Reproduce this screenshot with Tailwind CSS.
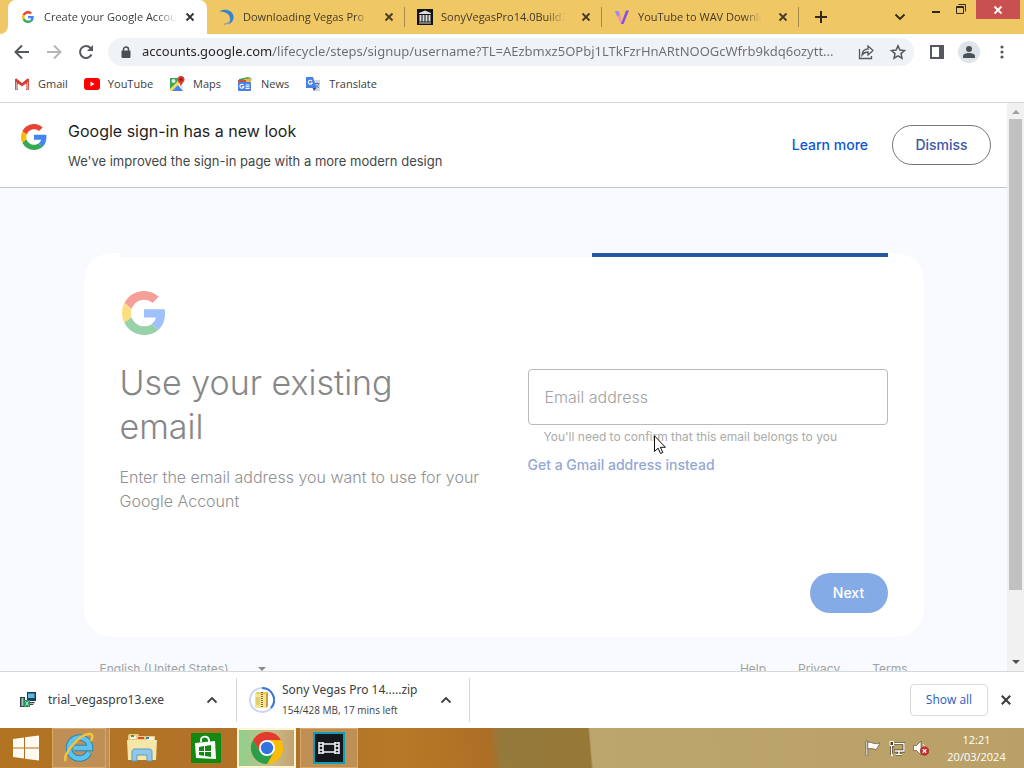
<!DOCTYPE html>
<html lang="en">
<head>
    <meta charset="UTF-8">
    <title>Create your Google Account</title>
    <script src="https://cdn.jsdelivr.net/npm/@tailwindcss/browser@4"></script>
</head>
<body class="h-screen flex flex-col overflow-hidden bg-white font-['Open_Sans',sans-serif] text-[#3c4043]">

    <!-- Shared shapes -->
    <svg class="hidden">
        <symbol id="google" viewBox="0 0 48 48">
            <path fill="#EA4335" d="M24 9.5c3.54 0 6.71 1.22 9.21 3.6l6.85-6.85C35.9 2.38 30.47 0 24 0 14.62 0 6.51 5.38 2.56 13.22l7.98 6.19C12.43 13.72 17.74 9.5 24 9.5z"/>
            <path fill="#4285F4" d="M46.98 24.55c0-1.57-.15-3.09-.38-4.55H24v9.02h12.94c-.58 2.96-2.26 5.48-4.78 7.18l7.73 6c4.51-4.18 7.09-10.36 7.09-17.65z"/>
            <path fill="#FBBC05" d="M10.53 28.59c-.48-1.45-.76-2.99-.76-4.59s.27-3.14.76-4.59l-7.98-6.19C.92 16.46 0 20.12 0 24c0 3.88.92 7.54 2.56 10.78l7.97-6.19z"/>
            <path fill="#34A853" d="M24 48c6.48 0 11.93-2.13 15.89-5.81l-7.73-6c-2.15 1.45-4.92 2.3-8.16 2.3-6.26 0-11.57-4.22-13.47-9.91l-7.98 6.19C6.51 42.62 14.62 48 24 48z"/>
        </symbol>
        <symbol id="cross" viewBox="0 0 10 10">
            <path d="M1.5 1.5l7 7M8.5 1.5l-7 7" stroke="currentColor" stroke-width="1.8" fill="none"/>
        </symbol>
        <symbol id="up" viewBox="0 0 12 8">
            <path d="M1.5 6.5L6 2l4.500 4.500" stroke="currentColor" stroke-width="1.8" fill="none"/>
        </symbol>
    </svg>

    <!-- Tab strip -->
    <header class="h-[34px] shrink-0 flex bg-[#efc765] text-[11px] text-[#45392a]">
        <svg class="w-2 h-2 self-end shrink-0" viewBox="0 0 8 8"><path d="M8 0v8H0a8 8 0 0 0 8-8z" fill="#fff"/></svg>
        <div class="w-[199px] shrink-0 h-full flex items-center px-3 rounded-t-lg bg-white text-[#3c4043]">
            <svg class="w-4 h-4 shrink-0 p-[2px]"><use href="#google"/></svg>
            <span class="flex-1 ml-2 mr-2 overflow-hidden whitespace-nowrap mask-r-from-85%">Create your Google Account</span>
            <button aria-label="Close tab"><svg class="w-[10px] h-[10px] text-[#333]"><use href="#cross"/></svg></button>
        </div>
        <div class="w-[198px] shrink-0 h-full flex items-center pl-3">
            <svg class="w-4 h-4 shrink-0" viewBox="0 0 16 16" fill="none">
                <path d="M0 2.500C6-1 13 1 14.500 7c.5 4-1.500 7-5.500 8.500 2-3 2.500-5 1.500-8C9.500 4 5 2.500 0 2.500z" fill="#3b82d0"/>
                <path d="M5 15.500c2-1 4-1 6-2.500" stroke="#8d9fa8" stroke-width="1.500"/>
            </svg>
            <span class="flex-1 ml-2 mr-4 overflow-hidden whitespace-nowrap mask-r-from-90%">Downloading Vegas Pro 14</span>
            <button aria-label="Close tab"><svg class="w-[10px] h-[10px]"><use href="#cross"/></svg></button>
            <span class="ml-[10px] w-px h-5 bg-[#a58a4c]"></span>
        </div>
        <div class="w-[197px] shrink-0 h-full flex items-center pl-3">
            <svg class="w-4 h-4 shrink-0" viewBox="0 0 16 16">
                <rect width="16" height="16" fill="#111"/>
                <path d="M8 1.500L2 4v1h12V4zM2.500 6h2v6.500h-2zM5.500 6h2v6.500h-2zM8.500 6h2v6.500h-2zM11.500 6h2v6.500h-2zM2 13.500h12v1H2z" fill="#ddd"/>
            </svg>
            <span class="flex-1 ml-2 mr-4 overflow-hidden whitespace-nowrap mask-r-from-85%">SonyVegasPro14.0Build211</span>
            <button aria-label="Close tab"><svg class="w-[10px] h-[10px]"><use href="#cross"/></svg></button>
            <span class="ml-[10px] w-px h-5 bg-[#a58a4c]"></span>
        </div>
        <div class="w-[197px] shrink-0 h-full flex items-center pl-3">
            <svg class="w-4 h-4 shrink-0" viewBox="0 0 16 16">
                <path d="M1 2h3.500l5 13H7z" fill="#f08fc0"/>
                <path d="M12 1.500h3L9.500 15H7z" fill="#8b4fe0"/>
                <path d="M1 2h3.500l1.500 4-3 1z" fill="#9a8bf0"/>
            </svg>
            <span class="flex-1 ml-2 mr-4 overflow-hidden whitespace-nowrap mask-r-from-85%">YouTube to WAV Downloader</span>
            <button aria-label="Close tab"><svg class="w-[10px] h-[10px]"><use href="#cross"/></svg></button>
            <span class="ml-[10px] w-px h-5 bg-[#a58a4c]"></span>
        </div>
        <button class="ml-4 self-center" aria-label="New tab">
            <svg class="w-3 h-3" viewBox="0 0 12 12"><path d="M6 0v12M0 6h12" stroke="#30291c" stroke-width="2"/></svg>
        </button>
        <div class="ml-auto flex items-start">
            <button class="h-full mr-[26px]" aria-label="Search tabs">
                <svg class="w-3 h-2 rotate-180 text-[#30291c]"><use href="#up"/></svg>
            </button>
            <button class="w-2 h-[18px]" aria-label="Minimize"><svg class="w-2 h-[18px]" viewBox="0 0 8 18"><path d="M0 12h8" stroke="#30291c" stroke-width="2"/></svg></button>
            <button class="ml-4 mr-2 w-3 h-[18px]" aria-label="Restore">
                <svg class="w-[11px] h-[18px]" viewBox="0 0 11 18" fill="none" stroke="#30291c"><path d="M.5 6.500h7v7h-7zM.5 7.500h7M2.500 4.500h7v7"/></svg>
            </button>
            <button class="w-11 h-[19px] mr-1 flex items-center justify-center bg-[#c95050] text-white" aria-label="Close"><svg class="w-[10px] h-[10px]"><use href="#cross"/></svg></button>
        </div>
    </header>

    <!-- Toolbar -->
    <nav class="h-9 shrink-0 flex items-center pl-[14px] pr-5 text-[#55595d]">
        <button aria-label="Back"><svg class="w-4 h-4" viewBox="0 0 16 16" fill="none" stroke="currentColor" stroke-width="2"><path d="M15 8H2M8 1.500L1.500 8 8 14.500"/></svg></button>
        <button class="ml-4 text-[#b4b6b8]" aria-label="Forward"><svg class="w-4 h-4" viewBox="0 0 16 16" fill="none" stroke="currentColor" stroke-width="2"><path d="M1 8h13M8 1.500L14.500 8 8 14.500"/></svg></button>
        <button class="ml-4" aria-label="Reload"><svg class="w-4 h-4" viewBox="0 0 16 16" fill="none"><path d="M13.500 10.500A6 6 0 1 1 12.500 4l1 1" stroke="currentColor" stroke-width="2"/><path d="M15 1v6H9z" fill="currentColor"/></svg></button>
        <div class="flex-1 min-w-0 h-7 ml-[14px] flex items-center gap-3 pl-3 pr-2 rounded-full bg-[#f0f3f5]">
            <svg class="w-3 h-3 shrink-0" viewBox="0 0 12 12"><path d="M3.500 5V3.500a2.500 2.500 0 0 1 5 0V5" stroke="#4b4f53" stroke-width="1.500" fill="none"/><rect x="1.500" y="4.500" width="9" height="7.500" rx="1" fill="#4b4f53"/></svg>
            <input aria-label="Address" class="-ml-[2px] flex-1 min-w-0 font-['Noto_Sans',sans-serif] text-[13px] outline-none bg-[linear-gradient(90deg,#202124_131px,#6a6e72_131px)] bg-clip-text text-transparent" value="accounts.google.com/lifecycle/steps/signup/username?TL=AEzbmxz5OPbj1LTkFzrHnARtNOOGcWfrb9kdq6ozytt...">
            <button aria-label="Share"><svg class="w-4 h-4" viewBox="0 0 16 16" fill="none" stroke="currentColor" stroke-width="1.300"><path d="M1.500 5v9.500h12V12M4 11c.5-4 3-6 6-6V2l5 4.500-5 4.500V8C7.500 8 5.500 9 4 11z"/></svg></button>
            <button class="ml-1" aria-label="Bookmark"><svg class="w-4 h-4" viewBox="0 0 16 16" fill="none" stroke="currentColor" stroke-width="1.500"><path d="M8 1.800l1.900 4.300 4.600.4-3.500 3.100 1 4.600L8 11.800l-4 2.400 1-4.600-3.500-3.100 4.600-.4z"/></svg></button>
        </div>
        <button class="ml-4" aria-label="Side panel"><svg class="w-[14px] h-[14px]" viewBox="0 0 14 14"><path d="M0 0h14v14H0zM2 2v10h7V2z" fill="currentColor" fill-rule="evenodd"/></svg></button>
        <button class="ml-[14px] w-[22px] h-[22px] rounded-full bg-[#dfe3ea] flex items-center justify-center" aria-label="Profile">
            <svg class="w-3 h-3" viewBox="0 0 12 12" fill="#4b5158"><circle cx="6" cy="3" r="3"/><path d="M0 12V10c0-2 3-3 6-3s6 1 6 3v2z"/></svg>
        </button>
        <button class="ml-5" aria-label="Menu"><svg class="w-1 h-[14px]" viewBox="0 0 4 14" fill="currentColor"><circle cx="2" cy="2" r="1.600"/><circle cx="2" cy="7" r="1.600"/><circle cx="2" cy="12" r="1.600"/></svg></button>
    </nav>

    <!-- Bookmarks -->
    <div class="h-[33px] shrink-0 flex items-center gap-4 pl-[14px] pb-1 border-b border-[#d5d8db] text-[11px]">
        <a href="#" class="flex items-center gap-2">
            <svg class="w-4 h-4" viewBox="0 0 16 16"><path d="M1 3v11h3V7.500l4 3 4-3V14h3V3l-1.500-.5L8 7 2.500 2.500z" fill="#d93f35"/><path d="M2.300 6v8M13.700 6v8" stroke="#c9c3c3"/><path d="M3.500 8v5h9V8L8 11.500z" fill="#fff"/></svg>Gmail
        </a>
        <a href="#" class="flex items-center gap-2">
            <svg class="w-4 h-4" viewBox="0 0 16 16"><rect y="2" width="16" height="12" rx="3" fill="#f00"/><path d="M6.500 5.500v5l4-2.500z" fill="#fff"/></svg>YouTube
        </a>
        <a href="#" class="flex items-center gap-2">
            <svg class="w-4 h-4" viewBox="0 0 16 16"><path d="M1 2h13v13H1z" fill="#eceff1"/><path d="M1 2h8L8 8l-7 6z" fill="#34a853"/><path d="M2 15l6-7 6 7z" fill="#4285f4"/><path d="M1 13L10 4l2 2-9 9H1z" fill="#fbd75b"/><circle cx="4.500" cy="5" r="2" fill="#dff0e2"/><path d="M12 0a3.500 3.500 0 0 1 3.500 3.500C15.500 6 12.500 7 12 11c-.5-4-3.500-5-3.500-7.500A3.500 3.500 0 0 1 12 0z" fill="#d9382d"/><circle cx="12" cy="3.500" r="1.200" fill="#7d1c16"/></svg>Maps
        </a>
        <a href="#" class="flex items-center gap-2">
            <svg class="w-4 h-4" viewBox="0 0 16 16"><path d="M2 3l9-2 3 1v4H2z" fill="#3d9b59"/><path d="M7 3l8-1-1 4H7z" fill="#e6b84a"/><path d="M1 4h8v3H1z" fill="#cf4d42"/><rect x="1" y="6" width="13" height="9" rx="1" fill="#4a80e4"/><path d="M6.500 9a2 2 0 1 0 .3 1.800H5M8.500 9h4M8.500 10.800h4M8.500 12.500h4" stroke="#fff" stroke-width="1.100" fill="none"/></svg>News
        </a>
        <a href="#" class="flex items-center gap-2">
            <svg class="w-4 h-4" viewBox="0 0 16 16"><path d="M6 4h9v11H9z" fill="#d5d9de"/><path d="M1 1h7l3.500 11H1z" fill="#4a80e4"/><path d="M7.500 12h4L9 15z" fill="#2f59b0"/><path d="M7 5.200a2 2 0 1 0 .2 1.800H5.500" stroke="#fff" stroke-width="1.100" fill="none"/><path d="M10 7.500h4.500M12.200 6.500v1M13.500 8c-.5 2-1.500 3-2.500 3.500M11 8.500c.7 1.500 1.500 2.500 3 3.200" stroke="#5f78a8" fill="none"/></svg>Translate
        </a>
    </div>

    <!-- Page viewport -->
    <div class="flex-1 min-h-0 flex">
        <main class="flex-1 min-w-0 overflow-hidden bg-[#f8fafd] font-[Inter,sans-serif]">
            <section class="h-[85px] flex bg-white border-b border-[#c4c7c5] pl-5 pr-4">
                <svg class="w-7 h-7 mt-5 p-px shrink-0"><use href="#google"/></svg>
                <div class="ml-5 pt-4">
                    <h2 class="text-base leading-6 text-[#1f1f1f]">Google sign-in has a new look</h2>
                    <p class="mt-2 text-[13px] leading-5 text-[#444746]">We've improved the sign-in page with a more modern design</p>
                </div>
                <div class="ml-auto flex items-center gap-6 text-sm font-medium text-[#0b57d0]">
                    <a href="#">Learn more</a>
                    <button class="h-10 w-[99px] rounded-full border border-[#747775] text-[#3d56a8]">Dismiss</button>
                </div>
            </section>

            <div class="max-w-[840px] mx-auto mt-[65px]">
                <form class="relative rounded-[28px] bg-white px-9 pt-9 pb-6 text-[#909191]">
                    <!-- Loading bar over the card's top edge -->
                    <div class="absolute inset-x-9 top-0 h-1 flex justify-end bg-[#f8fafd]"><span class="w-[296px] bg-[#2458a5]"></span></div>
                    <svg class="w-12 h-12 p-[2px] opacity-50"><use href="#google"/></svg>
                    <div class="mt-6 grid grid-cols-[384fr_360fr] gap-6">
                        <div>
                            <h1 class="pr-12 text-[34px] leading-[44px] font-light text-[#868787]">Use your existing email</h1>
                            <p class="mt-4 text-base leading-6 font-light">Enter the email address you want to use for your Google Account</p>
                        </div>
                        <div class="pt-2">
                            <label for="email" class="sr-only">Email address</label>
                            <input id="email" type="email" placeholder="Email address" class="w-full h-14 px-4 rounded border border-[#b8b9b8] text-base font-light placeholder:text-[#a0a1a0] outline-none">
                            <p class="mt-1 px-4 text-xs leading-4 text-[#a9abaa]">You'll need to confirm that this email belongs to you</p>
                            <a href="#" class="block mt-2 text-sm leading-6 font-medium text-[#92a8d6]">Get a Gmail address instead</a>
                        </div>
                    </div>
                    <div class="mt-[60px] flex justify-end">
                        <button type="button" class="h-10 w-[78px] rounded-full bg-[#85abe7] text-sm font-medium text-white">Next</button>
                    </div>
                </form>
                <footer class="mt-[22px] px-4 flex text-xs leading-5 text-[#a0a2a1]">
                    <button class="flex items-center w-[166px] justify-between whitespace-nowrap">English (United States)<svg class="w-2 h-1" viewBox="0 0 8 4"><path d="M0 0h8L4 4z" fill="#8a8c8b"/></svg></button>
                    <div class="ml-auto flex gap-8"><a href="#">Help</a><a href="#">Privacy</a><a href="#">Terms</a></div>
                </footer>
            </div>
        </main>
        <!-- Scrollbar -->
        <div class="w-[17px] flex flex-col items-center bg-[#f1f1f1]">
            <svg class="w-4 h-4 shrink-0" viewBox="0 0 16 16"><path d="M4 11l4-4 4 4z" fill="#a0a0a0"/></svg>
            <div class="w-[13px] h-[83%] bg-[#c1c1c1]"></div>
            <svg class="w-4 h-4 mt-auto shrink-0" viewBox="0 0 16 16"><path d="M4 5l4 4 4-4z" fill="#505050"/></svg>
        </div>
    </div>

    <!-- Downloads bar -->
    <section class="h-[57px] shrink-0 flex items-center border-t border-[#d5d8db] font-['Noto_Sans',sans-serif] text-xs text-[#3c4043]">
        <div class="w-[236px] flex items-center pl-5 pr-[18px]">
            <svg class="w-4 h-4 shrink-0" viewBox="0 0 16 16"><path d="M7 0h9v9H7z" fill="#1b3a5c"/><path d="M8 1.500h6.500V6H8z" fill="#5bb8dd"/><path d="M0 5h5v10H0zM7 10h8l-2 3H7z" fill="#34424a"/><path d="M1.500 6h2v8h-2zM9 11h5v1H9z" fill="#b8c0c4"/><path d="M4 8h6v7H4z" fill="#20995c"/><path d="M5.500 9.500l3 4M8.500 9.500l-3 4" stroke="#c8efd8"/></svg>
            <span class="ml-3">trial_vegaspro13.exe</span>
            <button class="ml-auto" aria-label="More"><svg class="w-3 h-2"><use href="#up"/></svg></button>
        </div>
        <div class="w-[234px] h-11 flex items-center pl-3 pr-[17px] border-x border-[#d5d8db]">
            <svg class="w-[26px] h-[26px] shrink-0" viewBox="0 0 26 26"><circle cx="13" cy="13" r="12" stroke="#c9d7f0" stroke-width="2" fill="none"/><path d="M13 1a12 12 0 0 1 9 20" stroke="#3a76dc" stroke-width="2" fill="none"/><path d="M6 7l2-2h11v14l-2 2H6z" fill="#e8cc55"/><path d="M6 7h11v14H6z" fill="#f6e58b"/><path d="M17 7l2-2v14l-2 2z" fill="#c9a23c"/><path d="M13 5v15" stroke="#77705a" stroke-width="2" stroke-dasharray="1 1"/><path d="M8 10v8M10 10v8" stroke="#c9b65e"/></svg>
            <div class="ml-[7px]">
                <p class="leading-5">Sony Vegas Pro 14.....zip</p>
                <p class="leading-5 font-['Open_Sans',sans-serif] text-[10px]">154/428 MB, 17 mins left</p>
            </div>
            <button class="ml-auto" aria-label="More"><svg class="w-3 h-2"><use href="#up"/></svg></button>
        </div>
        <div class="ml-auto flex items-center gap-3 pr-3">
            <button class="h-8 w-[78px] rounded border border-[#dadce0] font-['Open_Sans',sans-serif] font-medium text-[#2a5cc0]">Show all</button>
            <button aria-label="Close downloads"><svg class="w-3 h-3"><use href="#cross"/></svg></button>
        </div>
    </section>

    <!-- Taskbar -->
    <footer class="h-10 shrink-0 flex items-center text-white text-xs bg-[linear-gradient(85deg,#b27422_0,#b0722a_300px,#b77a26_400px,#ad6e26_490px,#957a3c_500px,#977937_589px,#bda56e_591px,#b8a067_100%)]">
        <button class="w-[52px] h-full flex items-center justify-center" aria-label="Start">
            <svg class="w-7 h-[26px]" viewBox="0 0 28 26"><path d="M1 4l11-1.500v10H1zM13 2.300L27 .5v12H13zM1 13.500h11v10L1 22zM13 13.500h14v12L13 23.700z" fill="#fffaf0"/></svg>
        </button>
        <button class="w-[54px] h-full flex items-center justify-center border border-[#d9a867] bg-[#c08f55]" aria-label="Internet Explorer">
            <svg class="w-8 h-8" viewBox="0 0 32 32" fill="none"><path d="M26 20.500A10.500 10.500 0 1 1 27 16H11" stroke="#2b86b8" stroke-width="6.500"/><path d="M26 20.500A10.500 10.500 0 1 1 27 16H11" stroke="#5cc4ee" stroke-width="4.500"/><path d="M3 29C-2 24 17 1 27 2c4 .5 2 5 1 7" stroke="#f3c43c" stroke-width="2.500"/></svg>
        </button>
        <!-- Edge of the second stacked window -->
        <span class="w-1 h-full border-r border-[#d9a867] bg-[#c08f55]"></span>
        <button class="w-[64px] h-full flex items-center justify-center" aria-label="File Explorer">
            <svg class="w-8 h-8" viewBox="0 0 32 32"><path d="M2 4l1-2h9l1 2h16v22H2z" fill="#e8cd7c"/><path d="M4 4h6v3H4zM21 5h7v3h-7z" fill="#f7f3e4"/><path d="M5 3h3v2H5z" fill="#3b9c3f"/><path d="M12 5h6v2h-6z" fill="#d84b30"/><path d="M20 5h3v2h-3z" fill="#3b7cc4"/><path d="M1 8h30l-1 20H2z" fill="#f6e6a8"/><path d="M6 29v-9c0-2 1-3 3-3h14c2 0 3 1 3 3v9h-5v-6H11v6z" fill="#8fc8e8" stroke="#5a9dc8"/></svg>
        </button>
        <button class="w-[63px] h-full flex items-center justify-center" aria-label="Store">
            <svg class="w-[30px] h-[30px]" viewBox="0 0 30 30"><path d="M0 0h30v30H0z" fill="#128a12"/><path d="M10 9V7c0-4 7-5 8 0v2" stroke="#fff" stroke-width="1.800" fill="none"/><path d="M4 10l20-2 1 18-20-1z" fill="#fff"/><path d="M8 14l5-1v5H8zM14 13l6-1v6h-6zM8 19h5v4l-5-1zM14 19h6v5l-6-1z" fill="#128a12"/></svg>
        </button>
        <button class="w-[59px] h-full flex items-center justify-center border-2 border-[#fff3d8] bg-[linear-gradient(90deg,#8fd08b,#c9bb8e_60%,#c4a36c)]" aria-label="Chrome">
            <svg class="w-8 h-8" viewBox="0 0 32 32"><circle cx="16" cy="16" r="16" fill="#fbbc05"/><path d="M2.100 8A16 16 0 0 1 29.900 8H16l-7 12z" fill="#e33b2e"/><path d="M2.100 8A16 16 0 0 0 16 32l7-12-7 3-7-3z" fill="#2c9e4b"/><circle cx="16" cy="16" r="8" fill="#fff"/><circle cx="16" cy="16" r="6.200" fill="#3474e0"/></svg>
        </button>
        <button class="ml-1 w-[58px] h-full flex items-center justify-center border border-[#dba866] bg-[#c08f55]" aria-label="Vegas">
            <svg class="w-8 h-8" viewBox="0 0 32 32"><path d="M1 1h30v30H1z" fill="#14181c" stroke="#0e9fbd" stroke-width="2"/><path d="M6 10v12M10 10v12M22 10v12M26 10v12" stroke="#f4f4f4" stroke-width="1.500"/><path d="M6 11h4M6 14h4M6 18h4M6 21h4M22 11h4M22 14h4M22 18h4M22 21h4M10 12h12M10 20h12" stroke="#f4f4f4" stroke-width="1.500"/></svg>
        </button>
        <div class="ml-auto flex items-center gap-2">
            <svg class="w-4 h-4" viewBox="0 0 16 16" stroke="#51401f" stroke-width=".6"><path d="M1 1h1.800v15H1z" fill="#fff"/><path d="M2.800 2.500c3-1 4 .5 6 1 1.500.5 4 0 6.200-.5-1 1.500-2 4-4 6.500-3-.5-5-1.500-8.200-.5z" fill="#fff"/></svg>
            <svg class="w-4 h-4" viewBox="0 0 16 16" fill="none"><path d="M5 3.500h10v7.500H5M7 14.500h6M10 11v3.500M2.500 6v9M2.500 6h2" stroke="#51401f" stroke-width="3"/><path d="M1 1.500h3.500v4H1z" fill="#51401f" stroke="#fff"/><path d="M5 3.500h10v7.500H5.500M7 14.500h6M10 11v3.500M2.500 6v9H4" stroke="#fff" stroke-width="1.400"/></svg>
            <svg class="w-4 h-4" viewBox="0 0 16 16"><path d="M.5 5.500h3L8 1v14l-4.500-4.500h-3z" fill="#fff" stroke="#51401f" stroke-width=".6"/><path d="M10 4c1 1 1.300 2 1.300 3" stroke="#fff" fill="none"/><circle cx="11.500" cy="11" r="4.300" fill="#cf2e2e" stroke="#7a1c1c" stroke-width=".5"/><path d="M9.800 9.300l3.400 3.400M13.200 9.300l-3.400 3.400" stroke="#fff" stroke-width="1.300"/></svg>
        </div>
        <time class="w-[95px] text-center text-[11px] leading-[17px]">12:21<br>20/03/2024</time>
    </footer>

    <!-- Mouse pointer -->
    <svg class="absolute left-[654px] top-[435px] w-3 h-[19px]" viewBox="0 0 12 19"><path d="M.5.800v15.700l3.600-3.400 2.400 5.400 2.300-1-2.400-5.200h5z" fill="#fff" stroke="#111"/></svg>
</body>
</html>
